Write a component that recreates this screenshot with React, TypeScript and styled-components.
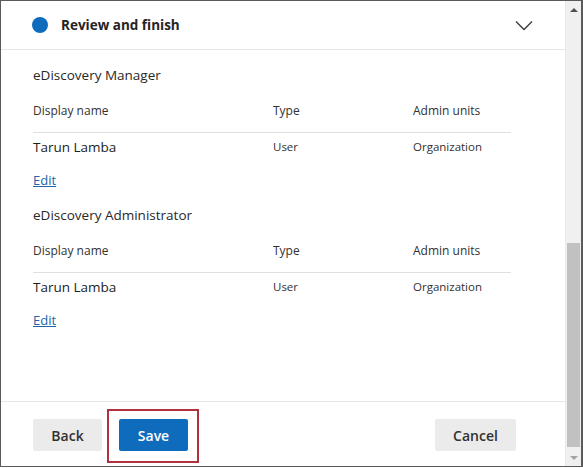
import styled, { createGlobalStyle } from 'styled-components';

const GlobalStyle = createGlobalStyle`
    html, body {
        margin: 0;
        padding: 0;
        background: #ffffff;
    }
    body {
        font-family: "Open Sans", "Noto Sans", "Liberation Sans", sans-serif;
        color: #323130;
    }
`;

const Frame = styled.div`
    display: flex;
    width: 583px;
    height: 467px;
    box-sizing: border-box;
    border: 1px solid #5a5a5a;
    border-right-width: 2px;
    background: #ffffff;
    overflow: hidden;
`;

const Panel = styled.div`
    flex: 1;
    display: flex;
    flex-direction: column;
    min-width: 0;
`;

const StepHeader = styled.div`
    display: flex;
    align-items: center;
    height: 48px;
    padding: 0 32px 0 31px;
    border-bottom: 1px solid #e6e6e6;
`;

const StepDot = styled.span`
    width: 16px;
    height: 16px;
    border-radius: 50%;
    background: #0f6cbd;
    margin-right: 13px;
    flex-shrink: 0;
`;

const StepTitle = styled.h2`
    flex: 1;
    margin: 0;
    font-size: 13.5px;
    font-weight: 700;
    line-height: 20px;
    color: #252423;
`;

const Body = styled.div`
    flex: 1;
    padding: 15px 54px 0 32px;
`;

const SectionTitle = styled.h3<{ $first?: boolean }>`
    margin: ${({ $first }) => ($first ? '0' : '15px')} 0 0;
    font-size: 13.5px;
    font-weight: 400;
    line-height: 20px;
    color: #292827;
`;

const Row = styled.div<{ $head?: boolean }>`
    display: grid;
    grid-template-columns: 240px 140px 1fr;
    align-items: end;
    box-sizing: border-box;
    height: ${({ $head }) => ($head ? '48px' : '28px')};
    padding-bottom: ${({ $head }) => ($head ? '11px' : '4px')};
    border-bottom: ${({ $head }) => ($head ? '1px solid #e1dfdd' : 'none')};
`;

const HeadCell = styled.span`
    font-size: 12px;
    line-height: 20px;
    color: #323130;
`;

const NameCell = styled.span`
    font-size: 13.5px;
    line-height: 20px;
    color: #201f1e;
`;

const Cell = styled.span`
    font-size: 11.5px;
    line-height: 20px;
    color: #323130;
`;

const EditLink = styled.a`
    display: inline-block;
    margin-top: 9px;
    font-size: 13px;
    line-height: 20px;
    color: #2066a8;
    text-decoration: underline;
    cursor: pointer;
`;

const Footer = styled.div`
    display: flex;
    align-items: flex-start;
    height: 65px;
    box-sizing: border-box;
    padding: 17px 49px 0 32px;
    border-top: 1px solid #e6e6e6;
`;

const Button = styled.button<{ $primary?: boolean }>`
    height: 32px;
    min-width: 69px;
    padding: 0 16px;
    border: none;
    border-radius: 2px;
    font-family: inherit;
    font-size: 14px;
    font-weight: 600;
    background: ${({ $primary }) => ($primary ? '#0f6cbd' : '#ebebeb')};
    color: ${({ $primary }) => ($primary ? '#ffffff' : '#323130')};
    cursor: pointer;
`;

const Highlight = styled.span`
    position: relative;
    margin-left: 17px;
    display: inline-flex;

    &::after {
        content: '';
        position: absolute;
        top: -10px;
        bottom: -12px;
        left: -12px;
        right: -11px;
        border: 2px solid #b0323c;
        pointer-events: none;
    }
`;

const CancelButton = styled(Button)`
    margin-left: auto;
    min-width: 81px;
`;

const ScrollBar = styled.div`
    width: 15px;
    display: flex;
    flex-direction: column;
    align-items: center;
    background: #f0f0f0;
    border-left: 1px solid #e9e9e9;
`;

const ScrollArrow = styled.div<{ $down?: boolean }>`
    height: 17px;
    width: 100%;
    display: flex;
    align-items: center;
    justify-content: center;

    &::before {
        content: '';
        border-left: 4px solid transparent;
        border-right: 4px solid transparent;
        ${({ $down }) =>
            $down ? 'border-top: 4px solid #a3a3a3;' : 'border-bottom: 4px solid #505050;'}
    }
`;

const ScrollTrack = styled.div`
    flex: 1;
    width: 100%;
    display: flex;
    flex-direction: column;
    justify-content: flex-end;
`;

const ScrollThumb = styled.div`
    height: 204px;
    margin: 0 1px 2px;
    background: #c1c1c1;
`;

const roles = [
    { title: 'eDiscovery Manager', members: [{ name: 'Tarun Lamba', type: 'User', units: 'Organization' }] },
    { title: 'eDiscovery Administrator', members: [{ name: 'Tarun Lamba', type: 'User', units: 'Organization' }] },
];

function Chevron() {
    return (
        <svg width="18" height="11" viewBox="0 0 18 11" fill="none">
            <path d="M1 1.5 L9 9.5 L17 1.5" stroke="#3b3a39" strokeWidth="1.3" />
        </svg>
    );
}

export default function App() {
    return (
        <>
            <GlobalStyle />
            <Frame>
                <Panel>
                    <StepHeader>
                        <StepDot />
                        <StepTitle>Review and finish</StepTitle>
                        <Chevron />
                    </StepHeader>
                    <Body>
                        {roles.map((role, i) => (
                            <div key={role.title}>
                                <SectionTitle $first={i === 0}>{role.title}</SectionTitle>
                                <Row $head>
                                    <HeadCell>Display name</HeadCell>
                                    <HeadCell>Type</HeadCell>
                                    <HeadCell>Admin units</HeadCell>
                                </Row>
                                {role.members.map((m) => (
                                    <Row key={m.name}>
                                        <NameCell>{m.name}</NameCell>
                                        <Cell>{m.type}</Cell>
                                        <Cell>{m.units}</Cell>
                                    </Row>
                                ))}
                                <EditLink>Edit</EditLink>
                            </div>
                        ))}
                    </Body>
                    <Footer>
                        <Button>Back</Button>
                        <Highlight>
                            <Button $primary>Save</Button>
                        </Highlight>
                        <CancelButton>Cancel</CancelButton>
                    </Footer>
                </Panel>
                <ScrollBar>
                    <ScrollArrow />
                    <ScrollTrack>
                        <ScrollThumb />
                    </ScrollTrack>
                    <ScrollArrow $down />
                </ScrollBar>
            </Frame>
        </>
    );
}
